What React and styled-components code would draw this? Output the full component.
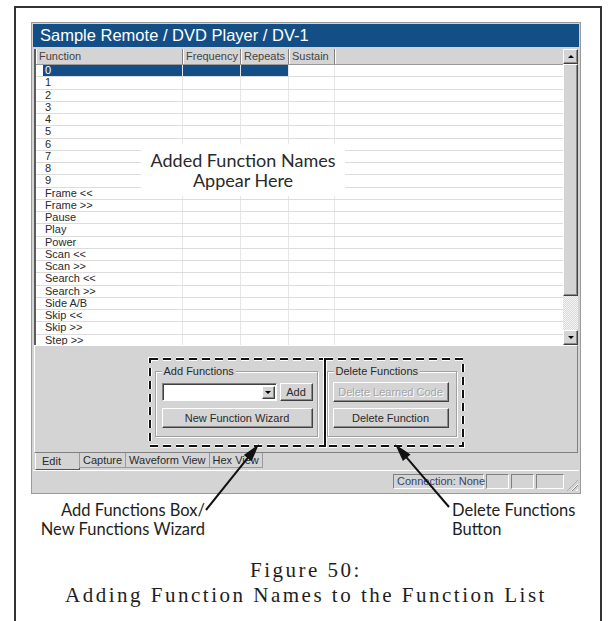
import React from 'react';
import styled, { createGlobalStyle } from 'styled-components';

const GlobalStyle = createGlobalStyle`
  html, body {
    margin: 0;
    padding: 0;
    background: #fff;
  }
  body {
    font-family: "Liberation Sans", Arial, sans-serif;
  }
`;

const UI_GREY = '#d4d4d4';
const TITLE_BLUE = '#134f86';

const Page = styled.div`
  position: relative;
  width: 608px;
  height: 621px;
  overflow: hidden;
  box-sizing: border-box;
  padding: 6px 0 0 14px;
`;

const Frame = styled.div`
  width: 588px;
  height: 615px;
  box-sizing: border-box;
  border: 2px solid #333;
  border-bottom: none;
  padding: 14px 0 0 15px;
`;

const Window = styled.div`
  width: 550px;
  box-sizing: border-box;
  border: 1px solid #9a9a9a;
  padding: 1px;
  background: ${UI_GREY};
`;

const TitleBar = styled.div`
  height: 23px;
  line-height: 23px;
  background: ${TITLE_BLUE};
  color: #fff;
  font-size: 16.5px;
  padding-left: 7px;
  margin-bottom: 2px;
  white-space: nowrap;
`;

const GridArea = styled.div`
  display: flex;
  height: 296px;
  margin: 0 1px;
  border-left: 2px solid #5c5c5c;
`;

const Table = styled.div`
  position: relative;
  flex: 1;
  overflow: hidden;
  background: #fff;
`;

const COLS = '147px 58px 48px 46px 1fr';

const HeaderRow = styled.div`
  display: grid;
  grid-template-columns: ${COLS};
  height: 16px;
  box-sizing: border-box;
  background: ${UI_GREY};
  border-bottom: 1px solid #9a9a9a;
`;

const HeaderCell = styled.div`
  font-size: 11px;
  line-height: 15px;
  color: #444;
  padding-left: 3px;
  border-right: ${(p) => (p.last ? 'none' : '1px solid #808080')};
  box-shadow: inset 1px 0 0 #fff;
  white-space: nowrap;
  overflow: hidden;
`;

const Row = styled.div`
  display: grid;
  grid-template-columns: ${COLS};
  height: 12.25px;
  box-sizing: border-box;
  border-bottom: 1px solid #dcdcdc;
`;

const Cell = styled.div`
  font-size: 11px;
  line-height: 11px;
  color: ${(p) => (p.selected ? '#fff' : '#2a2a2a')};
  background: ${(p) => (p.selected ? TITLE_BLUE : 'transparent')};
  border-right: ${(p) => (p.last ? 'none' : '1px solid #e6e6e6')};
  white-space: nowrap;
  overflow: hidden;
`;

const NameCell = styled(Cell)`
  padding-left: 9px;
  background: ${(p) =>
    p.selected
      ? `linear-gradient(90deg, transparent 7px, ${TITLE_BLUE} 7px)`
      : 'transparent'};
`;

const NoteBox = styled.div`
  position: absolute;
  left: 105px;
  top: 95px;
  width: 204px;
  height: 52px;
  background: #fff;
  display: flex;
  flex-direction: column;
  align-items: center;
  justify-content: center;
  font-family: Lato, "Open Sans", sans-serif;
  font-size: 18px;
  line-height: 20px;
  color: #2a2a2a;
`;

const Scrollbar = styled.div`
  width: 15px;
  display: flex;
  flex-direction: column;
  background: ${UI_GREY};
`;

const ScrollButton = styled.div`
  height: ${(p) => p.size || 15}px;
  flex-shrink: 0;
  box-sizing: border-box;
  border: 1px solid;
  border-color: #fff #404040 #404040 #fff;
  box-shadow: inset -1px -1px 0 #8a8a8a;
  background: ${UI_GREY};
  display: flex;
  align-items: center;
  justify-content: center;
`;

const ArrowGlyph = styled.div`
  width: 0;
  height: 0;
  border-left: 3px solid transparent;
  border-right: 3px solid transparent;
  ${(p) => (p.down ? 'border-top: 3px solid #000;' : 'border-bottom: 3px solid #000;')}
`;

const Track = styled.div`
  flex: 1;
  background: repeating-conic-gradient(#f4f4f4 0 25%, #dadada 0 50%) 0 0 / 2px 2px;
`;

const Panel = styled.div`
  height: 108px;
  box-sizing: border-box;
  margin: 0 1px;
  border: 1px solid;
  border-color: #fff #808080 #808080 #fff;
  display: flex;
  justify-content: center;
  align-items: flex-start;
  padding-top: 12px;
`;

const DashedBox = styled.div`
  position: relative;
  width: ${(p) => p.w}px;
  height: 89px;
  box-sizing: border-box;
  padding: ${(p) => p.pad};
  margin-left: ${(p) => p.shift || 0}px;
`;

const DashSvg = styled.svg`
  position: absolute;
  left: 0;
  top: 0;
  pointer-events: none;
  overflow: visible;
`;

const GroupBox = styled.div`
  position: relative;
  width: ${(p) => p.w}px;
  height: 66px;
  box-sizing: border-box;
  border: 1px solid #a0a0a0;
  box-shadow: inset 1px 1px 0 #fff, 1px 1px 0 #fff;
  padding: ${(p) => p.pad};
  display: flex;
  flex-direction: column;
  gap: ${(p) => p.gap}px;
`;

const GroupLabel = styled.span`
  position: absolute;
  top: -7px;
  left: 6px;
  padding: 0 2px;
  background: ${UI_GREY};
  font-size: 11px;
  line-height: 12px;
  color: #2a2a2a;
`;

const ControlRow = styled.div`
  display: flex;
  gap: 3px;
`;

const Combo = styled.div`
  width: 115px;
  height: 18px;
  box-sizing: border-box;
  background: #fff;
  border: 1px solid;
  border-color: #808080 #fff #fff #808080;
  box-shadow: inset 1px 1px 0 #404040;
  display: flex;
  justify-content: flex-end;
  padding: 2px 1px 1px 2px;
`;

const ComboButton = styled(ScrollButton)`
  width: 13px;
  height: 13px;
`;

const Button = styled.div`
  width: ${(p) => p.w}px;
  height: ${(p) => p.h || 20}px;
  box-sizing: border-box;
  border: 1px solid;
  border-color: #fff #404040 #404040 #fff;
  box-shadow: inset -1px -1px 0 #8a8a8a;
  background: ${UI_GREY};
  display: flex;
  align-items: center;
  justify-content: center;
  font-size: 11px;
  color: ${(p) => (p.disabled ? '#a4a4a4' : '#2a2a2a')};
  text-shadow: ${(p) => (p.disabled ? '1px 1px 0 #fff' : 'none')};
  white-space: nowrap;
`;

const TabStrip = styled.div`
  display: flex;
  align-items: flex-start;
  height: 17px;
  padding-left: 2px;
`;

const Tab = styled.div`
  height: ${(p) => (p.active ? 17 : 15)}px;
  box-sizing: border-box;
  padding: ${(p) => (p.active ? '2px 18px 0 6px' : '1px 3px 0 3px')};
  font-size: 11px;
  line-height: 13px;
  color: #2a2a2a;
  border: 1px solid;
  border-top: none;
  border-color: ${(p) => (p.active ? '#fff #555 #555 #fff' : '#9a9a9a')};
  margin-left: ${(p) => (p.active ? 0 : -1)}px;
  white-space: nowrap;
`;

const StatusBar = styled.div`
  position: relative;
  height: 22px;
  box-sizing: border-box;
  border-top: 1px solid #fff;
  display: flex;
  justify-content: flex-end;
  align-items: center;
  gap: 2px;
  padding-right: 15px;
`;

const StatusPanel = styled.div`
  width: ${(p) => p.w}px;
  height: 15px;
  box-sizing: border-box;
  border: 1px solid;
  border-color: #808080 #fff #fff #808080;
  font-size: 11px;
  line-height: 13px;
  color: #34446a;
  padding-left: 3px;
  white-space: nowrap;
`;

const Grip = styled.div`
  position: absolute;
  right: 1px;
  bottom: 1px;
  width: 11px;
  height: 11px;
  background: repeating-linear-gradient(
    135deg,
    transparent 0 2px,
    #fff 2px 3px,
    #8a8a8a 3px 4px
  );
  clip-path: polygon(100% 0, 100% 100%, 0 100%);
`;

const LabelRow = styled.div`
  display: flex;
  align-items: flex-start;
  padding-top: 7px;
  height: 52px;
  box-sizing: border-box;
`;

const Callout = styled.div`
  width: ${(p) => p.w}px;
  margin-left: ${(p) => p.offset || 0}px;
  text-align: ${(p) => p.align || 'left'};
  font-family: Lato, "Open Sans", sans-serif;
  font-size: 16.5px;
  line-height: 19px;
  color: #1e1e1e;
  white-space: nowrap;
`;

const Caption = styled.div`
  width: 550px;
  margin-top: 12px;
  text-align: center;
  font-family: "Liberation Serif", "Times New Roman", serif;
  font-size: 21px;
  line-height: 25px;
  letter-spacing: 2.5px;
  color: #1e1e1e;
`;

const Overlay = styled.svg`
  position: absolute;
  left: 0;
  top: 0;
  pointer-events: none;
`;

const functions = [
  '0', '1', '2', '3', '4', '5', '6', '7', '8', '9',
  'Frame <<', 'Frame >>', 'Pause', 'Play', 'Power',
  'Scan <<', 'Scan >>', 'Search <<', 'Search >>', 'Side A/B',
  'Skip <<', 'Skip >>', 'Step >>',
];

function DashedOutline({ w, h }) {
  return (
    <DashSvg width={w} height={h}>
      <rect x="1" y="1" width={w - 2} height={h - 2} fill="none"
        stroke="#fff" strokeWidth="4" strokeDasharray="8 5" />
      <rect x="1" y="1" width={w - 2} height={h - 2} fill="none"
        stroke="#111" strokeWidth="2" strokeDasharray="8 5" />
    </DashSvg>
  );
}

function Arrow({ x1, y1, x2, y2 }) {
  const dx = x2 - x1;
  const dy = y2 - y1;
  const len = Math.hypot(dx, dy);
  const ux = dx / len;
  const uy = dy / len;
  const hl = 18;
  const hw = 5;
  const bx = x2 - ux * hl;
  const by = y2 - uy * hl;
  const pts = [
    `${x2},${y2}`,
    `${bx - uy * hw},${by + ux * hw}`,
    `${bx + uy * hw},${by - ux * hw}`,
  ].join(' ');
  return (
    <g>
      <line x1={x1} y1={y1} x2={bx + ux * 2} y2={by + uy * 2} stroke="#111" strokeWidth="2" />
      <polygon points={pts} fill="#111" />
    </g>
  );
}

export default function App() {
  return (
    <Page>
      <GlobalStyle />
      <Frame>
        <Window>
          <TitleBar>Sample Remote / DVD Player / DV-1</TitleBar>
          <GridArea>
            <Table>
              <HeaderRow>
                <HeaderCell>Function</HeaderCell>
                <HeaderCell>Frequency</HeaderCell>
                <HeaderCell>Repeats</HeaderCell>
                <HeaderCell>Sustain</HeaderCell>
                <HeaderCell last />
              </HeaderRow>
              {functions.map((name, i) => (
                <Row key={name}>
                  <NameCell selected={i === 0}>{name}</NameCell>
                  <Cell selected={i === 0} />
                  <Cell selected={i === 0} />
                  <Cell />
                  <Cell last />
                </Row>
              ))}
              <NoteBox>
                <span>Added Function Names</span>
                <span>Appear Here</span>
              </NoteBox>
            </Table>
            <Scrollbar>
              <ScrollButton><ArrowGlyph /></ScrollButton>
              <ScrollButton size={232} />
              <Track />
              <ScrollButton><ArrowGlyph down /></ScrollButton>
            </Scrollbar>
          </GridArea>

          <Panel>
            <DashedBox w={177} pad="13px 8px 10px 6px">
              <GroupBox w={163} pad="11px 0 0 6px" gap={7}>
                <GroupLabel>Add Functions</GroupLabel>
                <ControlRow>
                  <Combo>
                    <ComboButton><ArrowGlyph down /></ComboButton>
                  </Combo>
                  <Button w={33} h={18}>Add</Button>
                </ControlRow>
                <Button w={151}>New Function Wizard</Button>
              </GroupBox>
              <DashedOutline w={177} h={89} />
            </DashedBox>
            <DashedBox w={140} pad="13px 7px 10px 3px" shift={-2}>
              <GroupBox w={130} pad="10px 0 0 5px" gap={6}>
                <GroupLabel>Delete Functions</GroupLabel>
                <Button w={116} disabled>Delete Learned Code</Button>
                <Button w={116}>Delete Function</Button>
              </GroupBox>
              <DashedOutline w={140} h={89} />
            </DashedBox>
          </Panel>

          <TabStrip>
            <Tab active>Edit</Tab>
            <Tab>Capture</Tab>
            <Tab>Waveform View</Tab>
            <Tab>Hex View</Tab>
          </TabStrip>

          <StatusBar>
            <StatusPanel w={91}>Connection: None</StatusPanel>
            <StatusPanel w={23} />
            <StatusPanel w={23} />
            <StatusPanel w={28} />
            <Grip />
          </StatusBar>
        </Window>

        <LabelRow>
          <Callout w={174} align="right">
            Add Functions Box/<br />New Functions Wizard
          </Callout>
          <Callout w={130} offset={247}>
            Delete Functions<br />Button
          </Callout>
        </LabelRow>

        <Caption>
          Figure 50:<br />Adding Function Names to the Function List
        </Caption>
      </Frame>

      <Overlay width="608" height="621">
        <Arrow x1={206} y1={510} x2={259} y2={444} />
        <Arrow x1={449} y1={507} x2={395} y2={444} />
      </Overlay>
    </Page>
  );
}
